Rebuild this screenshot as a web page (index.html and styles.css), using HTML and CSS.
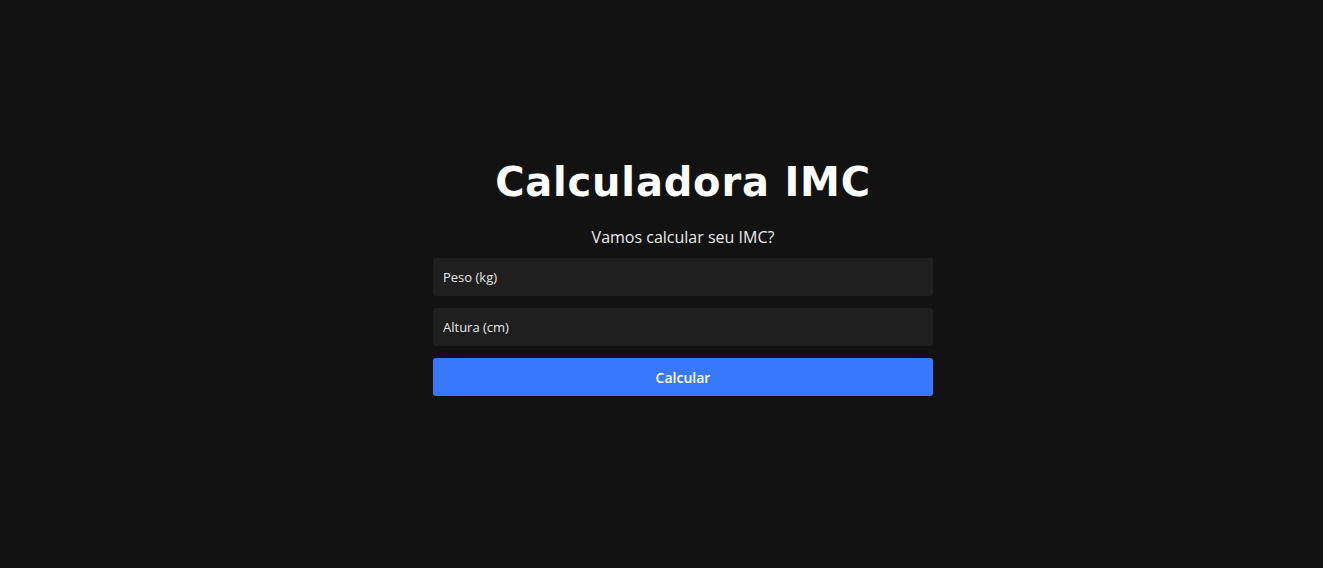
FILE: index.html
```html
<!DOCTYPE html>
<html lang="pt-BR">
<head>
<meta charset="utf-8">
<title>Calculadora IMC</title>
<link rel="stylesheet" href="styles.css">
</head>
<body>
<main class="page">
  <div class="calc">
    <h1 class="title">Calculadora IMC</h1>
    <p class="subtitle">Vamos calcular seu IMC?</p>
    <form class="form">
      <input class="field" type="text" placeholder="Peso (kg)">
      <input class="field" type="text" placeholder="Altura (cm)">
      <button class="btn" type="button">Calcular</button>
    </form>
  </div>
</main>
</body>
</html>
```
FILE: styles.css
```css
* { box-sizing: border-box; }
html, body { margin: 0; padding: 0; }
body {
  background: #121212;
  color: #fff;
  font-family: "Open Sans", "Noto Sans", sans-serif;
  min-height: 100vh;
}
.page {
  padding: 158px 0 0 43px;
}
.calc {
  width: 500px;
  margin: 0 auto;
  display: flex;
  flex-direction: column;
  align-items: center;
}
.title {
  margin: 0;
  font-family: "DejaVu Sans", sans-serif;
  font-size: 40px;
  font-weight: 700;
  letter-spacing: 0.8px;
  line-height: 48px;
  color: #fff;
}
.subtitle {
  margin: 21px 0 11px;
  font-size: 16px;
  line-height: 20px;
  color: #ececec;
}
.form {
  width: 100%;
  display: flex;
  flex-direction: column;
  gap: 12px;
}
.field {
  display: block;
  height: 38px;
  width: 100%;
  border: none;
  border-radius: 3px;
  background: #1f1f1f;
  color: #fff;
  font-family: inherit;
  font-size: 13px;
  padding: 0 10px;
  outline: none;
}
.field::placeholder { color: #e6e6e6; opacity: 1; }
.btn {
  display: block;
  height: 38px;
  width: 100%;
  border: none;
  border-radius: 3px;
  background: #3679fe;
  color: #fff;
  font-family: inherit;
  font-size: 14px;
  font-weight: 600;
  cursor: pointer;
}
```
